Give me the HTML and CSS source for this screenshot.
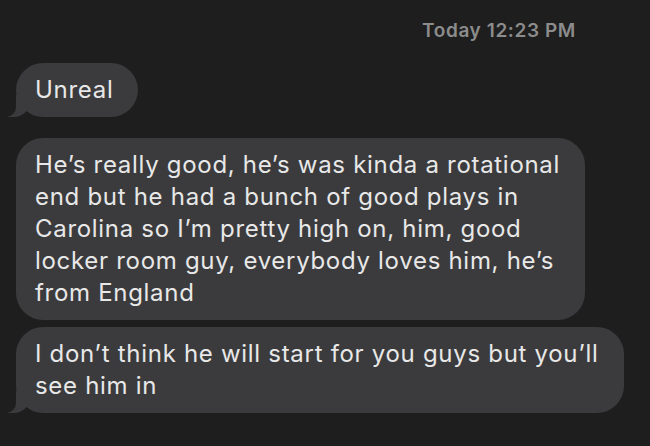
FILE: index.html
```html
<!DOCTYPE html>
<html lang="en">
<head>
    <meta charset="UTF-8">
    <meta name="viewport" content="width=device-width, initial-scale=1.0">
    <title>Messages</title>
    <link rel="stylesheet" href="styles.css">
</head>
<body>
    <div class="thread">
        <div class="stamp"><b>Today</b> 12:23 PM</div>

        <div class="bubble tail">Unreal</div>

        <div class="group">
            <div class="bubble">He’s really good, he’s was kinda a rotational<br>end but he had a bunch of good plays in<br>Carolina so I’m pretty high on, him, good<br>locker room guy, everybody loves him, he’s<br>from England</div>
            <div class="bubble tail">I don’t think he will start for you guys but you’ll<br>see him in</div>
        </div>
    </div>
</body>
</html>
```

FILE: styles.css
```css
body {
    margin: 0;
    height: 100vh;
    overflow: hidden;
    background-color: #1e1e1e;
    font-family: Inter, "Noto Sans", sans-serif;
}
.thread {
    display: flex;
    flex-direction: column;
    align-items: flex-start;
    padding: 18px 16px 0 16px;
}
.stamp {
    align-self: stretch;
    text-align: right;
    padding-right: 58px;
    color: #8c8c8c;
    font-size: 19px;
    font-weight: 600;
    letter-spacing: 0.6px;
    line-height: 26px;
    margin-bottom: 19px;
}
.stamp b {
    font-weight: 600;
}
.group {
    display: flex;
    flex-direction: column;
    align-items: flex-start;
    gap: 7px;
    margin-top: 21px;
}
.bubble {
    position: relative;
    background-color: #3b3b3d;
    color: #e8e8e8;
    font-size: 24px;
    letter-spacing: 0.7px;
    line-height: 32px;
    padding: 11px 25px 11px 19px;
    border-radius: 27px;
}
/* little hook at the bottom left of the last bubble */
.bubble.tail::before {
    content: "";
    position: absolute;
    left: -8px;
    bottom: 0;
    width: 22px;
    height: 22px;
    background-color: #3b3b3d;
    border-bottom-right-radius: 16px;
}
.bubble.tail::after {
    content: "";
    position: absolute;
    left: -12px;
    bottom: 0;
    width: 12px;
    height: 24px;
    background-color: #1e1e1e;
    border-bottom-right-radius: 10px;
}
```
